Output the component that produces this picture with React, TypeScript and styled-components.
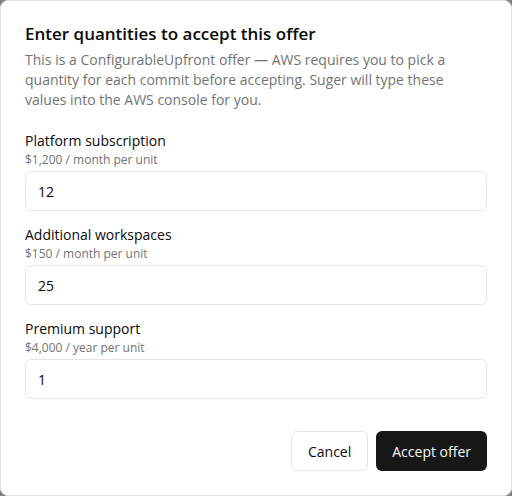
import React, { useState } from 'react';
import styled, { createGlobalStyle } from 'styled-components';

const GlobalStyle = createGlobalStyle`
  *, *::before, *::after { box-sizing: border-box; }
  body {
    margin: 0;
    background: #7f7f7f;
    color: #0a0a0a;
    font-family: 'Open Sans', 'Noto Sans', sans-serif;
    font-size: 14px;
    line-height: 20px;
  }
`;

const Dialog = styled.form`
  display: grid;
  gap: 24px;
  max-width: 512px;
  margin: 0 auto;
  padding: 24px;
  background: #fff;
  border: 1px solid #e5e5e5;
  border-radius: 8px;
`;

const Header = styled.header`
  display: grid;
  gap: 7px;
`;

const Title = styled.h2`
  margin: 0;
  font-size: 17px;
  line-height: 18px;
  font-weight: 600;
`;

const Description = styled.p`
  margin: 0;
  color: #737373;
`;

const Fields = styled.div`
  display: grid;
  gap: 17px;
  padding-bottom: 8px;
`;

const Field = styled.div`
  display: grid;
`;

const Label = styled.label`
  line-height: 14px;
`;

const Price = styled.span`
  margin: 4px 0 3px;
  color: #737373;
  font-size: 12px;
  line-height: 16px;
`;

const Input = styled.input`
  width: 100%;
  height: 40px;
  padding: 8px 12px;
  border: 1px solid #e5e5e5;
  border-radius: 6px;
  background: #fff;
  color: inherit;
  font: inherit;
  outline-color: #a3a3a3;
`;

const Footer = styled.footer`
  display: flex;
  justify-content: flex-end;
  gap: 8px;
`;

const Button = styled.button<{ $primary?: boolean }>`
  height: 40px;
  padding: 2px 16px 0;
  border: ${(p) => (p.$primary ? 'none' : '1px solid #e5e5e5')};
  border-radius: 6px;
  background: ${(p) => (p.$primary ? '#171717' : '#fff')};
  color: ${(p) => (p.$primary ? '#fafafa' : '#0a0a0a')};
  font: inherit;
  cursor: pointer;
`;

const commits = [
  { id: 'platform', name: 'Platform subscription', price: '$1,200 / month per unit', quantity: '12' },
  { id: 'workspaces', name: 'Additional workspaces', price: '$150 / month per unit', quantity: '25' },
  { id: 'support', name: 'Premium support', price: '$4,000 / year per unit', quantity: '1' },
];

export default function App() {
  const [quantities, setQuantities] = useState(commits.map((c) => c.quantity));

  return (
    <>
      <GlobalStyle />
      <Dialog role="dialog" aria-labelledby="title" aria-describedby="description" onSubmit={(e) => e.preventDefault()}>
        <Header>
          <Title id="title">Enter quantities to accept this offer</Title>
          <Description id="description">
            This is a ConfigurableUpfront offer — AWS requires you to pick a quantity for each commit before
            accepting. Suger will type these values into the AWS console for you.
          </Description>
        </Header>
        <Fields>
          {commits.map((commit, i) => (
            <Field key={commit.id}>
              <Label htmlFor={commit.id}>{commit.name}</Label>
              <Price id={`${commit.id}-price`}>{commit.price}</Price>
              <Input
                id={commit.id}
                inputMode="numeric"
                aria-describedby={`${commit.id}-price`}
                value={quantities[i]}
                onChange={(e) => setQuantities(quantities.map((q, j) => (j === i ? e.target.value : q)))}
              />
            </Field>
          ))}
        </Fields>
        <Footer>
          <Button type="button">Cancel</Button>
          <Button type="submit" $primary>Accept offer</Button>
        </Footer>
      </Dialog>
    </>
  );
}
